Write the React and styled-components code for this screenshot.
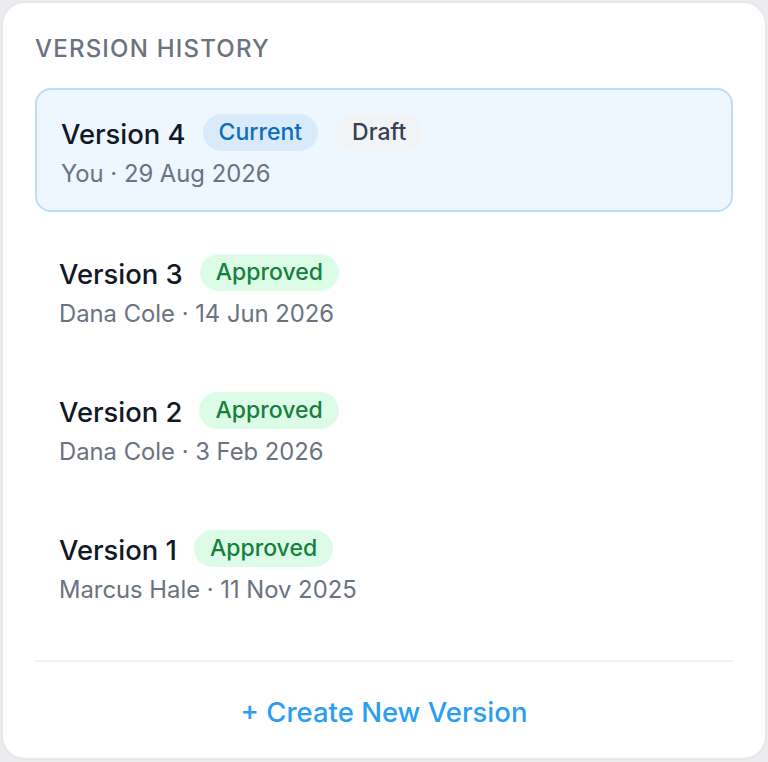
import React from "react";
import styled, { createGlobalStyle } from "styled-components";

const GlobalStyle = createGlobalStyle`
  html, body {
    margin: 0;
    padding: 0;
    background: #ececee;
  }
  body {
    font-family: Inter, "Noto Sans", "Liberation Sans", sans-serif;
    -webkit-font-smoothing: antialiased;
  }
`;

const Page = styled.div`
  padding: 1px 1px 2px 1px;
`;

const Card = styled.section`
  box-sizing: border-box;
  height: 759px;
  background: #ffffff;
  border: 2px solid #e5e7eb;
  border-radius: 24px;
  padding: 31px 32px 30px;
  display: flex;
  flex-direction: column;
`;

const Heading = styled.h2`
  margin: 0 0 25px;
  font-size: 24px;
  line-height: 29px;
  font-weight: 500;
  letter-spacing: 1.2px;
  text-transform: uppercase;
  color: #6b7280;
`;

const List = styled.ul`
  list-style: none;
  margin: 0;
  padding: 0;
  display: flex;
  flex-direction: column;
  gap: 18px;
`;

const Item = styled.li`
  padding: 24px 24px 21px;
  border-radius: 16px;
  border: ${(p) => (p.$active ? "2px solid #bddcf5" : "none")};
  background: ${(p) => (p.$active ? "#eef6fe" : "transparent")};
  display: flex;
  flex-direction: column;
  gap: 7px;
`;

const TitleRow = styled.div`
  display: flex;
  align-items: center;
  gap: 17px;
`;

const Title = styled.span`
  padding-top: 4px;
  font-size: 27.4px;
  line-height: 33px;
  font-weight: 500;
  color: #111827;
`;

const tones = {
  current: { bg: "#d9eafb", fg: "#0f6cb6" },
  draft: { bg: "#f2f3f5", fg: "#374151" },
  approved: { bg: "#dcfce7", fg: "#15803d" },
};

const Badges = styled.div`
  display: flex;
  gap: 18px;
`;

const Badge = styled.span`
  display: inline-block;
  padding: 5px 16px;
  border-radius: 999px;
  font-size: 23px;
  line-height: 27px;
  font-weight: 500;
  background: ${(p) => tones[p.$tone].bg};
  color: ${(p) => tones[p.$tone].fg};
`;

const Meta = styled.span`
  font-size: 23.8px;
  line-height: 31px;
  color: #6b7280;
`;

const Footer = styled.div`
  margin-top: auto;
  border-top: 2px solid #f0f1f3;
  display: flex;
  justify-content: center;
  padding-top: 34px;
`;

const CreateButton = styled.button`
  border: none;
  background: none;
  padding: 0;
  font-family: inherit;
  font-size: 27.5px;
  line-height: 32px;
  font-weight: 500;
  color: #2a9ef0;
  cursor: pointer;
`;

const versions = [
  { name: "Version 4", meta: "You · 29 Aug 2026", badges: [["current", "Current"], ["draft", "Draft"]], active: true },
  { name: "Version 3", meta: "Dana Cole · 14 Jun 2026", badges: [["approved", "Approved"]] },
  { name: "Version 2", meta: "Dana Cole · 3 Feb 2026", badges: [["approved", "Approved"]] },
  { name: "Version 1", meta: "Marcus Hale · 11 Nov 2025", badges: [["approved", "Approved"]] },
];

export default function App() {
  return (
    <Page>
      <GlobalStyle />
      <Card>
        <Heading>Version History</Heading>
        <List>
          {versions.map((v) => (
            <Item key={v.name} $active={v.active}>
              <TitleRow>
                <Title>{v.name}</Title>
                <Badges>
                  {v.badges.map(([tone, label]) => (
                    <Badge key={label} $tone={tone}>
                      {label}
                    </Badge>
                  ))}
                </Badges>
              </TitleRow>
              <Meta>{v.meta}</Meta>
            </Item>
          ))}
        </List>
        <Footer>
          <CreateButton>+ Create New Version</CreateButton>
        </Footer>
      </Card>
    </Page>
  );
}
